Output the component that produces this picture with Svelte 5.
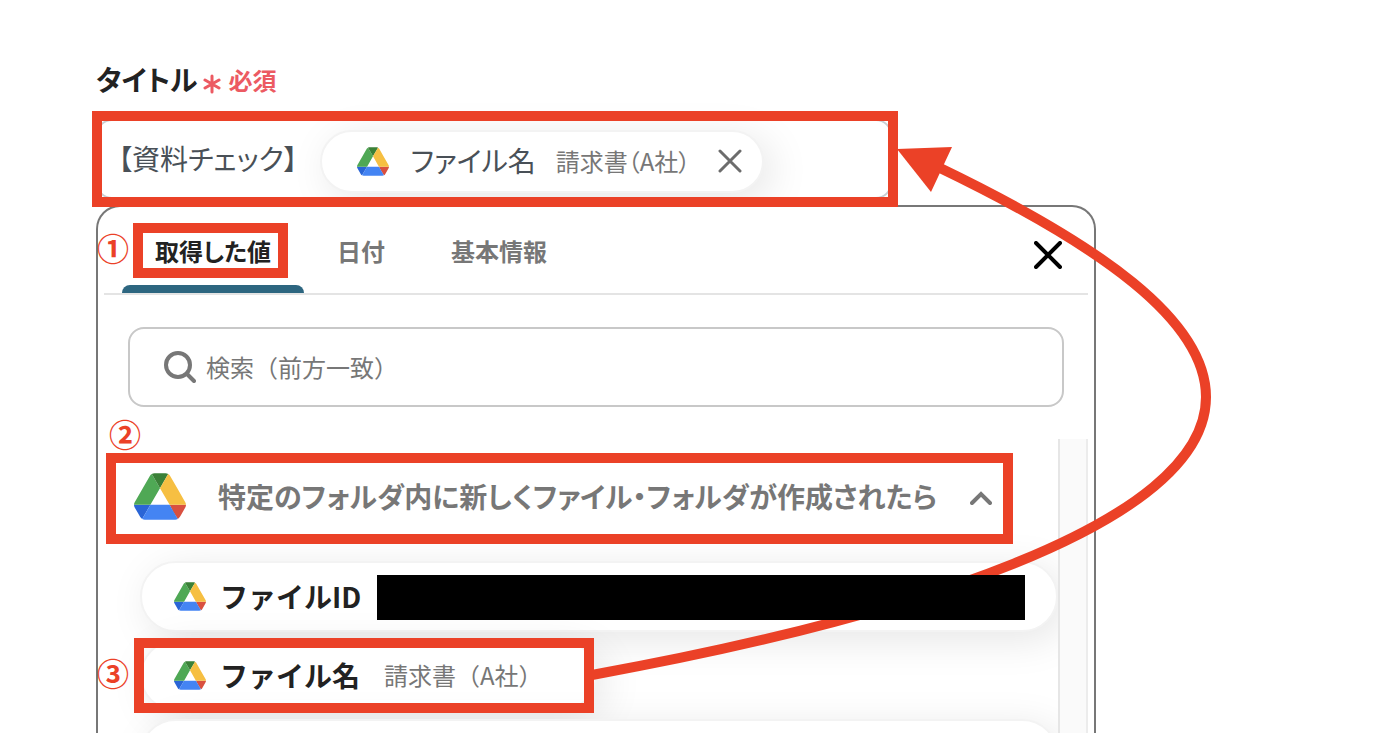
<script>
  let query = $state('');
  let activeTab = $state(0);
  let open = $state(true);

  const tabs = ['取得した値', '日付', '基本情報'];
</script>

{#snippet drive(size)}
  <svg class="drive {size}" viewBox="0 0 87.3 78" aria-hidden="true">
    <path fill="#2a65d6" d="m6.6 66.85 3.85 6.65c.8 1.4 1.95 2.5 3.3 3.3l13.75-23.8h-27.5c0 1.55.4 3.1 1.2 4.5z" />
    <path fill="#4fa855" d="m43.65 25-13.75-23.8c-1.35.8-2.5 1.9-3.3 3.3l-25.4 44a9.06 9.06 0 0 0-1.2 4.5h27.5z" />
    <path fill="#d95040" d="m73.55 76.8c1.35-.8 2.5-1.9 3.3-3.3l1.6-2.75 7.65-13.25c.8-1.4 1.2-2.95 1.2-4.5h-27.5l5.85 11.5z" />
    <path fill="#3a8037" d="m43.65 25 13.75-23.8c-1.35-.8-2.9-1.2-4.5-1.2h-18.5c-1.6 0-3.15.45-4.5 1.2z" />
    <path fill="#4484f3" d="m59.8 53h-32.3l-13.75 23.8c1.35.8 2.9 1.2 4.5 1.2h50.8c1.6 0 3.15-.45 4.5-1.2z" />
    <path fill="#f6bf42" d="m73.4 26.5-12.7-22c-.8-1.4-1.95-2.5-3.3-3.3l-13.75 23.8 16.15 28h27.45c0-1.55-.4-3.1-1.2-4.5z" />
  </svg>
{/snippet}

<main>
  <div class="label">
    <span class="name">タイトル</span>
    <svg class="asterisk" viewBox="0 0 18 20" aria-hidden="true">
      <path d="M9 2v16M2 6l14 8M16 6L2 14" />
    </svg>
    <span class="required">必須</span>
  </div>

  <div class="field">
    <span class="value">【資料チェック】</span>
    <span class="chip">
      {@render drive('small')}
      <span class="chip-name">ファイル名</span>
      <span class="chip-sample">請求書（A社）</span>
      <button class="remove" aria-label="削除">
        <svg viewBox="0 0 24 24"><path d="M2 2l20 20M22 2L2 22" /></svg>
      </button>
    </span>
  </div>

  <section class="panel">
    <div class="tabs">
      {#each tabs as tab, i}
        <button class="tab" class:active={activeTab === i} onclick={() => (activeTab = i)}>{tab}</button>
      {/each}
      <button class="close" aria-label="閉じる">
        <svg viewBox="0 0 28 28"><path d="M2 2l24 24M26 2L2 26" /></svg>
      </button>
    </div>

    <label class="search">
      <svg viewBox="0 0 32 32" aria-hidden="true">
        <circle cx="14" cy="14" r="12" />
        <path d="M23 23l7 7" />
      </svg>
      <input type="text" aria-label="検索" placeholder="検索（前方一致）" bind:value={query} />
    </label>

    <div class="scroll">
      <div class="list">
        <button class="group" aria-expanded={open} onclick={() => (open = !open)}>
          {@render drive('large')}
          <span class="group-name">特定のフォルダ内に新しくファイル・フォルダが作成されたら</span>
          <svg class="chevron" viewBox="0 0 22 14" aria-hidden="true"><path d="M2 12l9-9 9 9" /></svg>
        </button>

        {#if open}
          <button class="item wide">
            {@render drive('small')}
            <span class="item-name">ファイルID</span>
            <span class="redacted"></span>
          </button>
          <button class="item">
            {@render drive('small')}
            <span class="item-name">ファイル名</span>
            <span class="item-sample">請求書（A社）</span>
          </button>
          <button class="item wide" aria-label="項目"></button>
        {/if}
      </div>
      <div class="gutter"></div>
    </div>
  </section>

  <!-- annotations drawn over the form -->
  <svg class="arrow" viewBox="0 0 1390 733" aria-hidden="true">
    <path class="line" d="M592 675C900 619 1206 526 1206 397C1206 320 1100 245 938 167" />
    <path class="head" d="M897 149L952 147L931 192Z" />
  </svg>
  <div class="mark title-mark"></div>
  <div class="mark tab-mark"></div>
  <div class="mark group-mark"></div>
  <div class="mark item-mark"></div>
  <span class="step one">①</span>
  <span class="step two">②</span>
  <span class="step three">③</span>
</main>

<style>
  :global(body) {
    margin: 0;
    background: #fff;
  }

  main {
    position: relative;
    display: flex;
    flex-direction: column;
    box-sizing: border-box;
    height: 100vh;
    padding: 60px 294px 0 96px;
    overflow: hidden;
    font-family: 'Noto Sans CJK JP', sans-serif;
    font-feature-settings: 'palt';
    color: #222;
  }

  button {
    padding: 0;
    border: none;
    background: none;
    font: inherit;
    font-feature-settings: inherit;
    color: inherit;
    text-align: left;
    cursor: pointer;
  }

  svg {
    flex: none;
    fill: none;
    stroke-linecap: round;
  }

  .drive.small {
    width: 32px;
    height: 29px;
  }
  .drive.large {
    width: 52px;
    height: 47px;
  }

  .label {
    display: flex;
    align-items: center;
    height: 40px;
    flex: none;
  }
  .name {
    padding-bottom: 2px;
    font-size: 28px;
    font-weight: 700;
  }
  .asterisk {
    width: 18px;
    height: 20px;
    margin: 8px 7px 0 6px;
    stroke: #ec5a62;
    stroke-width: 3;
  }
  .required {
    padding-bottom: 2px;
    font-size: 24px;
    font-weight: 700;
    color: #ec5a62;
  }

  .field {
    display: flex;
    align-items: center;
    box-sizing: border-box;
    flex: none;
    width: calc(80% - 4px);
    height: 80px;
    margin-top: 19px;
    padding-left: 20px;
    border: 2px solid #c8ced3;
    border-radius: 16px;
    color: #495057;
  }
  .value {
    padding-bottom: 2px;
    font-size: 28px;
  }
  .chip {
    display: flex;
    align-items: center;
    box-sizing: border-box;
    height: 63px;
    margin: 4px 0 0 22px;
    padding: 0 20px 0 35px;
    border: 2px solid #f3f3f3;
    border-radius: 32px;
    background: #fff;
    box-shadow: 8px 8px 40px rgba(0, 0, 0, 0.1);
  }
  .chip-name {
    margin-left: 22px;
    padding-bottom: 2px;
    font-size: 28px;
  }
  .chip-sample {
    margin-left: 20px;
    padding-bottom: 2px;
    font-size: 24px;
    color: #777;
  }
  .remove {
    display: flex;
    margin-left: 28px;
  }
  .remove svg {
    width: 24px;
    height: 24px;
    stroke: #6c6c6c;
    stroke-width: 3;
  }

  .panel {
    display: flex;
    flex-direction: column;
    flex: 1;
    min-height: 0;
    margin-top: 6px;
    padding: 0 6px;
    border: 2px solid #777;
    border-bottom: none;
    border-radius: 24px 24px 0 0;
    background: #fff;
  }

  .tabs {
    display: flex;
    flex: none;
    height: 86px;
    padding: 0 26px 0 18px;
    border-bottom: 2px solid #e4e4e4;
  }
  .tab {
    padding: 0 33px;
    font-size: 24px;
    font-weight: 700;
    color: #777;
  }
  .tab.active {
    position: relative;
    color: #222;
  }
  .tab.active::after {
    content: '';
    position: absolute;
    left: 0;
    right: 0;
    bottom: 0;
    height: 8px;
    border-radius: 8px 8px 0 0;
    background: #2d6680;
  }
  .close {
    display: flex;
    align-items: center;
    margin-left: auto;
    padding-top: 10px;
  }
  .close svg {
    width: 28px;
    height: 28px;
    stroke: #000;
    stroke-width: 4;
  }

  .search {
    display: flex;
    align-items: center;
    gap: 10px;
    box-sizing: border-box;
    flex: none;
    height: 80px;
    margin: 32px 24px;
    padding: 0 34px;
    border: 2px solid #c8c8c8;
    border-radius: 16px;
  }
  .search svg {
    width: 32px;
    height: 32px;
    stroke: #777;
    stroke-width: 4;
  }
  .search input {
    flex: 1;
    min-width: 0;
    padding: 0 0 2px;
    border: none;
    outline: none;
    background: none;
    font: inherit;
    font-size: 24px;
    font-feature-settings: normal;
    color: #222;
  }
  .search input::placeholder {
    color: #777;
    opacity: 1;
  }

  .scroll {
    display: flex;
    flex: 1;
    min-height: 0;
  }
  .list {
    display: flex;
    flex-direction: column;
    align-items: flex-start;
    gap: 8px;
    flex: 1;
    min-width: 0;
    padding-left: 36px;
    overflow: hidden;
  }
  .gutter {
    width: 26px;
    border-left: 2px solid #e6e6e6;
    border-right: 2px solid #ececec;
    background: #fafafa;
  }

  .group {
    display: flex;
    align-items: center;
    flex: none;
    height: 114px;
    margin-left: -6px;
    color: #777;
  }
  .group-name {
    margin: 0 33px 0 32px;
    font-size: 28px;
    font-weight: 700;
    white-space: nowrap;
  }
  .chevron {
    width: 22px;
    height: 14px;
    margin-top: 4px;
    stroke: #777;
    stroke-width: 4;
  }

  .item {
    display: flex;
    align-items: center;
    box-sizing: border-box;
    flex: none;
    height: 71px;
    padding: 0 52px 0 32px;
    border: 2px solid #f3f3f3;
    border-radius: 36px;
    background: #fff;
    box-shadow: 8px 8px 40px rgba(0, 0, 0, 0.1);
  }
  .item.wide {
    width: 100%;
    padding-right: 31px;
  }
  .item-name {
    margin-left: 14px;
    padding-bottom: 2px;
    font-size: 28px;
    font-weight: 700;
    font-feature-settings: normal;
  }
  .item-sample {
    margin-left: 24px;
    padding-bottom: 2px;
    font-size: 24px;
    font-feature-settings: normal;
    color: #777;
  }
  .redacted {
    position: relative;
    z-index: 2;
    flex: 1;
    height: 45px;
    margin: 2px 0 0 16px;
    background: #000;
  }

  .arrow {
    position: absolute;
    top: 0;
    left: 0;
    z-index: 1;
    width: 1390px;
    height: 733px;
    pointer-events: none;
  }
  .line {
    stroke: #eb4127;
    stroke-width: 10;
    stroke-linecap: butt;
  }
  .head {
    fill: #eb4127;
  }
  .mark {
    position: absolute;
    z-index: 1;
    box-sizing: border-box;
    border: 10px solid #eb4127;
    pointer-events: none;
  }
  .title-mark {
    top: 111px;
    left: 92px;
    width: 806px;
    height: 96px;
  }
  .tab-mark {
    top: 223px;
    left: 133px;
    width: 155px;
    height: 55px;
  }
  .group-mark {
    top: 453px;
    left: 106px;
    width: 907px;
    height: 91px;
  }
  .item-mark {
    top: 638px;
    left: 134px;
    width: 460px;
    height: 75px;
  }
  .step {
    position: absolute;
    z-index: 1;
    font-size: 32px;
    line-height: 32px;
    font-weight: 700;
    color: #eb4127;
  }
  .one {
    top: 231px;
    left: 97px;
  }
  .two {
    top: 417px;
    left: 109px;
  }
  .three {
    top: 656px;
    left: 97px;
  }
</style>
